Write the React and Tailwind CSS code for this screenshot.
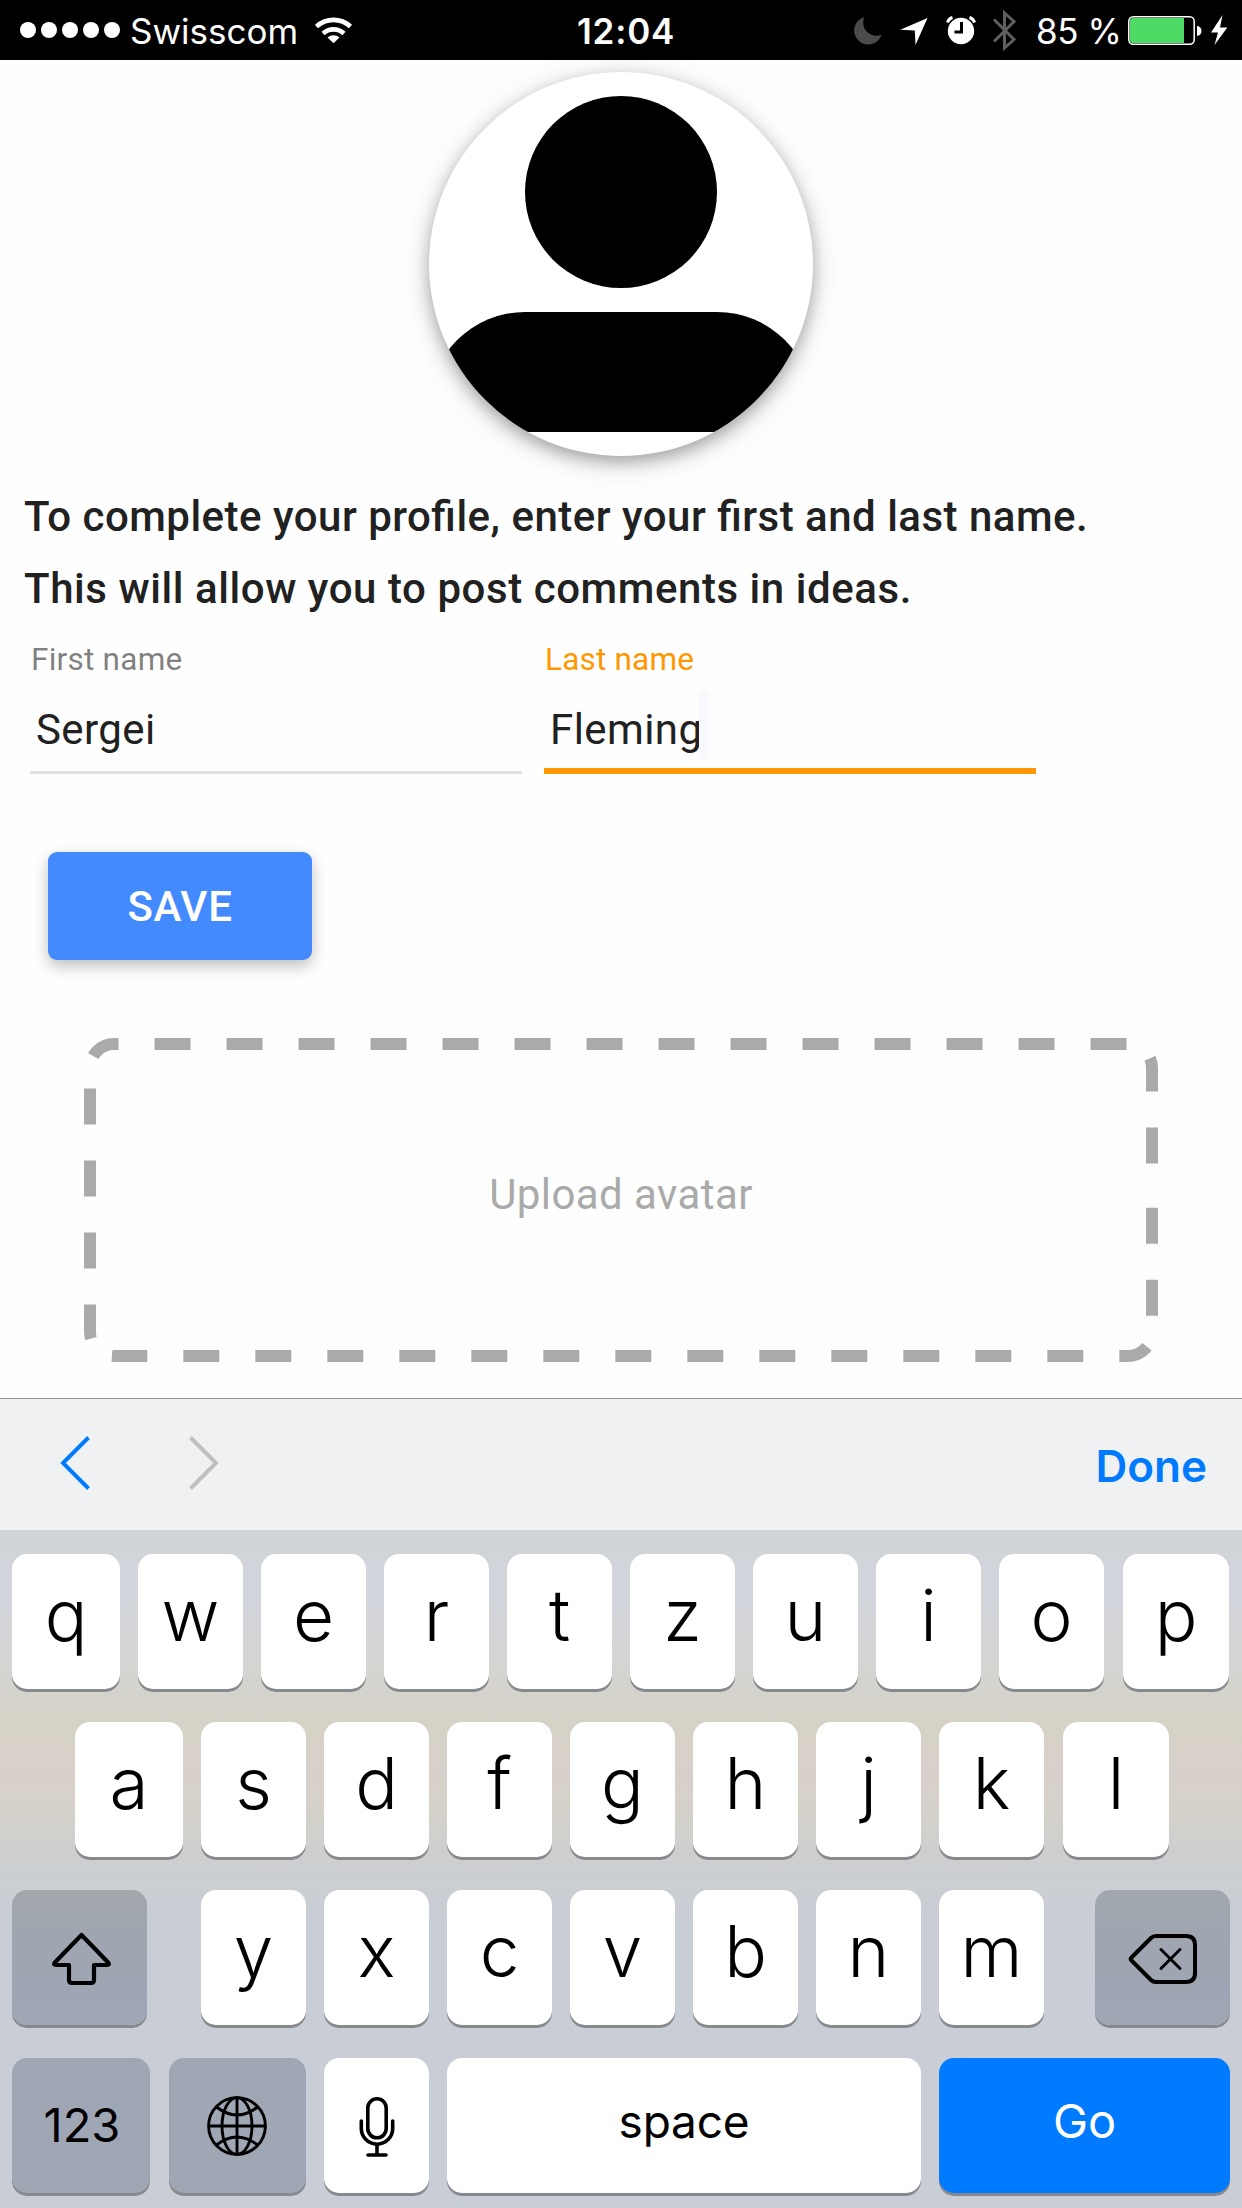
import React from "react";

const INTER = "font-['Inter','Liberation_Sans',sans-serif]";

function StatusBar() {
  return (
    <header className={`${INTER} flex h-[60px] w-full items-start bg-black leading-none text-white`}>
      <div className="ml-[20px] mt-[22px] flex gap-[5px]">
        {[0, 1, 2, 3, 4].map((i) => (
          <span key={i} className="size-4 rounded-full bg-white" />
        ))}
      </div>
      <span className="ml-[10px] mt-[14px] w-[185px] whitespace-nowrap text-[35px]">Swisscom</span>
      <svg className="h-[60px] w-[38px]" viewBox="315 0 38 60" fill="none" stroke="#fff" strokeWidth="4.6">
        <path d="M316.5 26.5a25 25 0 0 1 34 0" />
        <path d="M323 33.5a15.5 15.5 0 0 1 21 0" />
        <path d="M327.5 37.6a9 9 0 0 1 12 0L333.500 43.300Z" fill="#fff" stroke="none" />
      </svg>
      <span className="ml-[224px] mt-[14px] w-[277px] whitespace-nowrap text-[35px] font-semibold tracking-[0.8px]">12:04</span>
      <svg className="h-[60px] w-[28px]" viewBox="854 0 28 60" fill="#4b4b4b">
        <path d="M864.500 17A14 14 0 1 0 881.600 34.500A13 13 0 0 1 864.500 17Z" />
      </svg>
      <svg className="ml-[18px] h-[60px] w-[28px]" viewBox="900 0 28 60" fill="#fff">
        <path d="M927.500 18L915.500 45L914.800 30.500L900.300 29.800Z" />
      </svg>
      <svg className="ml-[18px] h-[60px] w-[30px]" viewBox="946 0 30 60">
        <circle cx="961" cy="31" r="13.200" fill="#fff" />
        <path d="M947.500 22.500a7 7 0 0 1 5 -5M974.500 22.500a7 7 0 0 0 -5 -5" stroke="#fff" strokeWidth="3" fill="none" />
        <path d="M961.500 22v10h-7" stroke="#000" strokeWidth="3" fill="none" />
      </svg>
      <svg className="ml-[17px] h-[60px] w-[24px]" viewBox="993 0 24 60" fill="none" stroke="#5f5f5f" strokeWidth="3">
        <path d="M994 19.500L1014 39.500L1004.500 48V13L1014 21.500L994 41.500" />
      </svg>
      <span className="ml-[19px] mt-[14px] w-[92px] whitespace-nowrap text-[35px] tracking-[-0.4px]">85 %</span>
      <svg className="h-[60px] w-[100px]" viewBox="1128 0 100 60">
        <rect x="1128.800" y="16.800" width="65.400" height="27.400" rx="4.500" fill="none" stroke="#fff" strokeWidth="1.500" />
        <path d="M1133 18H1184V43H1133a3 3 0 0 1 -3 -3V21a3 3 0 0 1 3 -3Z" fill="#4cd964" />
        <path d="M1197 26a4.500 5 0 0 1 0 10Z" fill="#fff" />
        <path d="M1222.500 15L1211 32.500H1218L1214.500 45L1227.300 27.500H1220Z" fill="#fff" />
      </svg>
    </header>
  );
}

function Avatar() {
  return (
    <div className="mx-auto mt-3 size-[384px] overflow-hidden rounded-full bg-white shadow-[0_6px_15px_rgba(0,0,0,0.26),0_6px_30px_rgba(0,0,0,0.16)]">
      <svg className="size-full" viewBox="0 0 384 384">
        <circle cx="192" cy="120" r="96" />
        <path d="M0 360V336A96 96 0 0 1 96 240H288A96 96 0 0 1 384 336V360Z" />
      </svg>
    </div>
  );
}

function Field({ label, value, active }) {
  return (
    <div
      className={
        active
          ? "h-[131px] w-[492px] border-b-[6px] border-[#ff9800]"
          : "h-[131px] w-[492px] border-b-[3px] border-[#e0e0e0]"
      }
    >
      <div
        className={
          active
            ? "h-8 pl-px pt-px text-[31.5px] leading-none tracking-[0.2px] text-[#ff9800]"
            : "h-8 pl-px pt-px text-[31.5px] leading-none tracking-[0.25px] text-black/50"
        }
      >
        {label}
      </div>
      <div className="mt-[15px] flex h-[69px] items-start pl-[6px] text-[42px] leading-none tracking-[0.42px]">
        <span className="mt-[19px]">{value}</span>
        {active && <span className="-ml-[3px] h-[69px] w-[9px] rounded-[3px] bg-[#f8f9ff]" />}
      </div>
    </div>
  );
}

function UploadBox() {
  return (
    <div className="relative mx-[84px] mt-[78px] flex h-[324px] items-start justify-center pt-[136px] text-[42px] leading-none tracking-[0.42px] text-[#aaa]">
      <svg className="absolute inset-0 size-full" viewBox="0 0 1074 324" fill="none">
        <clipPath id="dash-edge">
          <path
            clipRule="evenodd"
            d="M30 0H1044A30 30 0 0 1 1074 30V294A30 30 0 0 1 1044 324H30A30 30 0 0 1 0 294V30A30 30 0 0 1 30 0ZM30 12A18 18 0 0 0 12 30V294A18 18 0 0 0 30 312H1044A18 18 0 0 0 1062 294V30A18 18 0 0 0 1044 12Z"
          />
        </clipPath>
        <path
          clipPath="url(#dash-edge)"
          stroke="#aaa"
          strokeWidth="28"
          strokeDasharray="36 36"
          strokeDashoffset="64.300"
          d="M1074 162V294A30 30 0 0 1 1044 324H30A30 30 0 0 1 0 294V30A30 30 0 0 1 30 0H1044A30 30 0 0 1 1074 30V160"
        />
      </svg>
      <span>Upload avatar</span>
    </div>
  );
}

function Toolbar() {
  return (
    <div className={`${INTER} flex h-[132px] items-start border-t border-[#8e9094] bg-[#eff1f3]`}>
      <svg className="ml-[60px] mt-[36px] h-[56px] w-[31px]" viewBox="60 1435 31 56" fill="none" stroke="#007aff" strokeWidth="3.900">
        <path d="M88.500 1437.500L63 1463L88.500 1488.500" />
      </svg>
      <svg className="ml-[97px] mt-[36px] h-[56px] w-[31px]" viewBox="188 1435 31 56" fill="none" stroke="#bfbfbf" strokeWidth="3.900">
        <path d="M190.500 1437.500L216 1463L190.500 1488.500" />
      </svg>
      <span className="ml-auto mr-[35px] mt-[45px] text-[44px] font-semibold leading-none text-[#007aff]">Done</span>
    </div>
  );
}

const LETTER = "w-[105px] bg-white pt-[26px] text-[71px] font-[350]";
const WIDE = "w-[108px] bg-white pt-[26px] text-[71px] font-[350]";
const LAST = "ml-px w-[106px] bg-white pt-[26px] text-[71px] font-[350]";

function Key({ className, children }) {
  return (
    <div className={`flex h-[135px] shrink-0 items-start justify-center rounded-[15px] leading-none text-black shadow-[0_3px_0_#88898d] ${className}`}>
      {children}
    </div>
  );
}

function ShiftIcon() {
  return (
    <svg className="ml-[3px] size-[60px]" viewBox="51 1929 60 60" fill="none" stroke="#000" strokeWidth="4.200" strokeLinejoin="round">
      <path d="M81.500 1935L54.800 1962.500Q53 1965 56 1965H69V1980Q69 1983 72 1983H91Q94 1983 94 1980V1965H107Q110 1965 108.200 1962.500Z" />
    </svg>
  );
}

function DeleteIcon() {
  return (
    <svg className="h-[54px] w-[70px]" viewBox="1128 1932 70 54" fill="none" stroke="#000" strokeWidth="4" strokeLinecap="round" strokeLinejoin="round">
      <path d="M1131.500 1957.500L1151 1938Q1153 1936 1156 1936H1186Q1195 1936 1195 1945V1973Q1195 1982 1186 1982H1156Q1153 1982 1151 1980L1131.500 1960.500Q1130 1959 1131.500 1957.500Z" />
      <path strokeWidth="3" d="M1161 1949.500L1180 1968.500M1180 1949.500L1161 1968.500" />
    </svg>
  );
}

function GlobeIcon() {
  return (
    <svg className="mr-[2px] size-[60px]" viewBox="0 0 60 60" fill="none" stroke="#000" strokeWidth="2.900">
      <circle cx="30" cy="30" r="28.400" />
      <ellipse cx="30" cy="30" rx="15" ry="28.400" />
      <path d="M30 1.500V58.500M1.500 30H58.500M9.500 11Q30 27 50.500 11M9.500 49Q30 33 50.500 49" />
    </svg>
  );
}

function MicIcon() {
  return (
    <svg className="h-[60px] w-[36px]" viewBox="359 2097 36 60" fill="none" stroke="#000" strokeWidth="3.600" strokeLinecap="round">
      <rect x="367.800" y="2098.800" width="18.400" height="39" rx="9.200" />
      <path d="M361.300 2121V2128.500A15.700 15.700 0 0 0 392.700 2128.500V2121" />
      <path d="M377 2145V2154M368 2155H386" />
    </svg>
  );
}

function Keyboard() {
  return (
    <div
      className={`${INTER} flex h-[678px] flex-col gap-[33px] pt-6 bg-[linear-gradient(180deg,#d0d4d8_0px,#d2d5dc_65px,#d4d4d3_130px,#d5d2ca_175px,#d6d2c6_197px,#d8d0ca_235px,#d5d1ca_280px,#cdcfcf_322px,#c9cdd5_390px,#c9cdd5_678px)]`}
    >
      <div className="flex gap-[18px] pl-3">
        {"qwertzuiop".split("").map((c) => (
          <Key key={c} className={c === "q" ? WIDE : c === "p" ? LAST : LETTER}>{c}</Key>
        ))}
      </div>
      <div className="flex gap-[18px] pl-[75px]">
        {"asdfghjkl".split("").map((c) => (
          <Key key={c} className={c === "a" ? WIDE : c === "l" ? LAST : LETTER}>{c}</Key>
        ))}
      </div>
      <div className="flex gap-[18px] pl-3">
        <Key className="mr-9 w-[135px] bg-[linear-gradient(180deg,#a1a7aa,#9fa6b2_45%,#9fa6b4)] pt-[39px]"><ShiftIcon /></Key>
        {"yxcvbnm".split("").map((c) => (
          <Key key={c} className={LETTER}>{c}</Key>
        ))}
        <Key className="ml-[33px] w-[135px] bg-[linear-gradient(180deg,#a1a7ad,#9fa6b2_45%,#9fa6b4)] pt-[42px]"><DeleteIcon /></Key>
      </div>
      <div className="flex gap-[18px] pl-3">
        <Key className="w-[138px] bg-[#9fa6b4] pl-[2px] pt-[43px] text-[47px]">123</Key>
        <Key className="ml-px w-[137px] bg-[#9fa6b4] pt-[38px]"><GlobeIcon /></Key>
        <Key className="w-[105px] bg-white pt-[39px]"><MicIcon /></Key>
        <Key className="w-[474px] bg-white pt-[40px] text-[46px] tracking-[-0.2px]">space</Key>
        <Key className="w-[291px] bg-[#007aff] pt-[39px] text-[47px] text-white">Go</Key>
      </div>
    </div>
  );
}

export default function App() {
  return (
    <div className="flex h-[2208px] w-[1242px] flex-col overflow-hidden bg-[#fefefe] font-['Roboto','Liberation_Sans',sans-serif] text-[#212121]">
      <StatusBar />
      <main className="h-[1338px]">
        <Avatar />
        <p className="mt-[25px] pl-6 text-[42px] font-medium leading-[72px] tracking-[0.56px] [font-feature-settings:'liga'_1]">
          <span className="tracking-[0.49px]">To complete your profile, enter your first and last name.</span>
          <br />
          This will allow you to post comments in ideas.
        </p>
        <div className="ml-[30px] mt-[18px] flex gap-[22px]">
          <Field label="First name" value="Sergei" />
          <Field label="Last name" value="Fleming" active />
        </div>
        <button className="ml-12 mt-[78px] flex h-[108px] w-[264px] items-start justify-center rounded-[9px] bg-[#448aff] pt-[34px] text-[42px] font-medium leading-none tracking-[0.7px] text-white shadow-[0_6px_15px_rgba(0,0,0,0.26)]">
          SAVE
        </button>
        <UploadBox />
      </main>
      <Toolbar />
      <Keyboard />
    </div>
  );
}
